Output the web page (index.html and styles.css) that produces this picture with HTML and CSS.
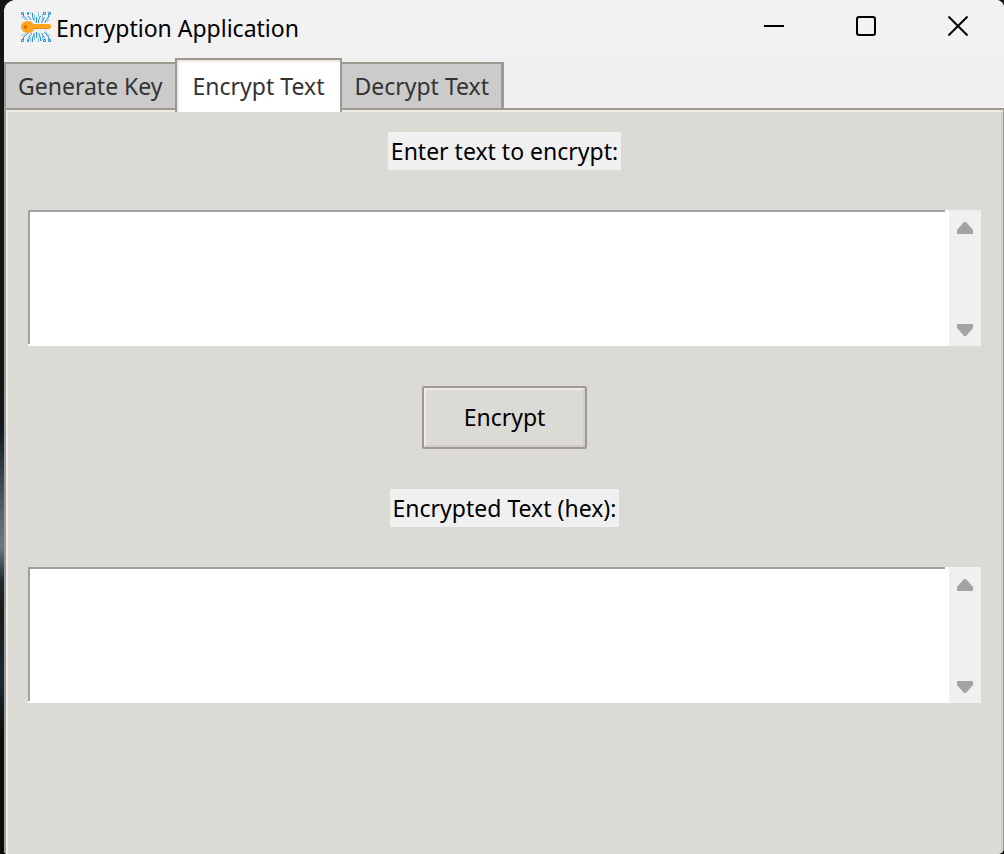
FILE: index.html
```html
<!DOCTYPE html>
<html lang="en">
<head>
<meta charset="utf-8">
<title>Encryption Application</title>
<link rel="stylesheet" href="styles.css">
</head>
<body>
<div class="window">
  <header class="titlebar">
    <svg class="app-icon" viewBox="0 0 32 32" aria-hidden="true">
      <g fill="none" stroke="#2f8fd3" stroke-width="1">
        <path d="M3.500 3v2l4 4M8 5l3 4M12.500 2v3l1 4M16.500 6v6M20.500 5l-2 4v3M24.500 6l-3 6M28.500 4v2l-4 6M3.500 29v-3l5-4M9 28v-2l3-4M12.500 31v-4l2-5M16.500 27v-6M20.500 30v-3l-2-5M24.500 27l-3-5M28.500 28v-2l-4-5"/>
        <path stroke="#7cc8ee" d="M1 6h2l2 3M10.500 1v2M14.500 4v6M18.500 1v5M22.500 3v4l-1 4M29 8l-2 3M1 24h3l2-2M10.500 31v-5M14.500 29v-5M18.500 31v-5M22.500 29v-4M30 24h-2l-3-4"/>
      </g>
      <g fill="#f2f2f2" stroke="#2f8fd3" stroke-width="1">
        <path d="M1.500 1.500h2v2h-2zM28.500 1.500h2v2h-2zM1.500 28.500h2v2h-2zM28.500 28.500h2v2h-2zM7.500 28.500h1v2h-1zM23.500 28.500h2v2h-2zM23.500 1.500h2v2h-2zM7.500 1.500h1v2h-1z"/>
      </g>
      <path fill="#fba61c" d="M8 10c3 0 4 1 5 3h16l2 1v3l-2 1H14c-1 3-3 4-6 4-4 0-7-3-7-6s3-6 7-6z"/>
      <circle cx="5.500" cy="16" r="1.800" fill="#d9690c"/>
      <path d="M14 17.500h15" stroke="#f08c10"/>
    </svg>
    <h1 class="title">Encryption Application</h1>
    <div class="controls">
      <button class="control" type="button" aria-label="Minimize">
        <svg viewBox="0 0 20 20" aria-hidden="true"><path d="M0 10h20"/></svg>
      </button>
      <button class="control" type="button" aria-label="Maximize">
        <svg viewBox="0 0 20 20" aria-hidden="true"><rect x="1" y="1" width="18" height="18" rx="2"/></svg>
      </button>
      <button class="control" type="button" aria-label="Close">
        <svg viewBox="0 0 20 20" aria-hidden="true"><path d="M.5.5l19 19M19.500.5l-19 19"/></svg>
      </button>
    </div>
  </header>
  <nav class="tabs" role="tablist">
    <button class="tab" type="button" role="tab" aria-selected="false">Generate Key</button>
    <button class="tab tab-active" type="button" role="tab" aria-selected="true">Encrypt Text</button>
    <button class="tab" type="button" role="tab" aria-selected="false">Decrypt Text</button>
  </nav>
  <main class="pane" role="tabpanel">
    <label class="label" for="plain">Enter text to encrypt:</label>
    <div class="field">
      <div class="sheet"><textarea class="text" id="plain"></textarea></div>
      <div class="scrollbar">
        <button class="arrow" type="button" aria-label="Scroll up"><svg viewBox="0 0 16 12" aria-hidden="true"><path d="M7 0h2l7 8v4H0V8z"/></svg></button>
        <button class="arrow" type="button" aria-label="Scroll down"><svg viewBox="0 0 16 12" aria-hidden="true"><path d="M0 0h16v4l-7 8H7L0 4z"/></svg></button>
      </div>
    </div>
    <button class="action" type="button"><span class="action-face">Encrypt</span></button>
    <label class="label" for="cipher">Encrypted Text (hex):</label>
    <div class="field">
      <div class="sheet"><textarea class="text" id="cipher"></textarea></div>
      <div class="scrollbar">
        <button class="arrow" type="button" aria-label="Scroll up"><svg viewBox="0 0 16 12" aria-hidden="true"><path d="M7 0h2l7 8v4H0V8z"/></svg></button>
        <button class="arrow" type="button" aria-label="Scroll down"><svg viewBox="0 0 16 12" aria-hidden="true"><path d="M0 0h16v4l-7 8H7L0 4z"/></svg></button>
      </div>
    </div>
  </main>
</div>
</body>
</html>
```
FILE: styles.css
```css
* {
  box-sizing: border-box;
}

body {
  margin: 0;
  min-height: 100vh;
  display: flex;
  padding-left: 4px;
  background: linear-gradient(#151417 0 44%, #10181f 50%, #54626a 60%, #6b7a82 64%, #202a30 68%, #18191c 72%, #1b2a35 80%, #0c0c0d 86%);
  font-family: "Noto Sans", "Open Sans", sans-serif;
  font-size: 23px;
  color: #000;
}

button {
  font: inherit;
  color: inherit;
  margin: 0;
  padding: 0;
  border: 0;
  background: none;
}

.window {
  flex: 1;
  display: flex;
  flex-direction: column;
  border-radius: 12px 8px 6px 4px;
  background: #f0f0f0;
  overflow: hidden;
}

.titlebar {
  display: flex;
  align-items: center;
  height: 58px;
  padding: 0 0 4px 16px;
  background: #f3f2f2;
}

.app-icon {
  width: 32px;
  height: 32px;
}

.title {
  flex: 1;
  margin: 0;
  padding: 2px 0 0 4px;
  font-size: 23px;
  font-weight: 400;
  line-height: 32px;
}

.controls {
  display: flex;
  align-self: stretch;
  padding-bottom: 2px;
}

.control {
  width: 92px;
  display: flex;
  align-items: center;
  justify-content: center;
}

.control svg {
  width: 20px;
  height: 20px;
  fill: none;
  stroke: #000;
  stroke-width: 2;
}

.tabs {
  display: flex;
  align-items: flex-end;
  height: 50px;
}

.tab {
  height: 46px;
  padding: 0 12px;
  border-top: 2px solid #9e9a91;
  border-left: 2px solid #9e9a91;
  background: #cbcbcb;
  color: #333;
}

.tab:last-child {
  border-right: 3px solid #9e9a91;
}

.tab-active {
  z-index: 1;
  height: 54px;
  padding: 0 16px;
  margin-bottom: -4px;
  border-right: 2px solid #9e9a91;
  background: #fff;
  box-shadow: inset 2px 2px #eeebe7;
}

.tab-active + .tab {
  border-left: 0;
}

.pane {
  flex: 1;
  display: flex;
  flex-direction: column;
  align-items: center;
  gap: 40px;
  padding: 22px 22px 40px;
  border: 2px solid #9e9a91;
  border-width: 2px 1px 0 2px;
  background: #dbdad5;
  box-shadow: inset 2px 2px #eeebe7, inset -2px 0 #cfcdc8;
}

.label {
  padding: 0 3px;
  line-height: 38px;
  background: #f0f0f0;
}

.field {
  align-self: stretch;
  display: flex;
  height: 136px;
}

.sheet {
  flex: 1;
  display: flex;
  padding: 0 4px 2px 0;
  background: #fff;
}

.text {
  flex: 1;
  resize: none;
  border: 0 solid #a0a0a0;
  border-width: 2px 0 0 2px;
  background: #fff;
  font: inherit;
  outline: 0;
}

.scrollbar {
  width: 32px;
  display: flex;
  flex-direction: column;
  justify-content: space-between;
  background: #f0f0f0;
}

.arrow {
  height: 34px;
  padding-top: 2px;
  display: flex;
  align-items: center;
  justify-content: center;
}

.arrow svg {
  width: 16px;
  height: 12px;
  fill: #a3a3a3;
}

.action {
  display: flex;
  border: 2px solid #9e9a91;
  border-radius: 2px;
}

.action-face {
  padding: 0 38px;
  line-height: 55px;
  border: 2px solid;
  border-color: #eeebe7 #cfcdc8 #cfcdc8 #eeebe7;
}
```
